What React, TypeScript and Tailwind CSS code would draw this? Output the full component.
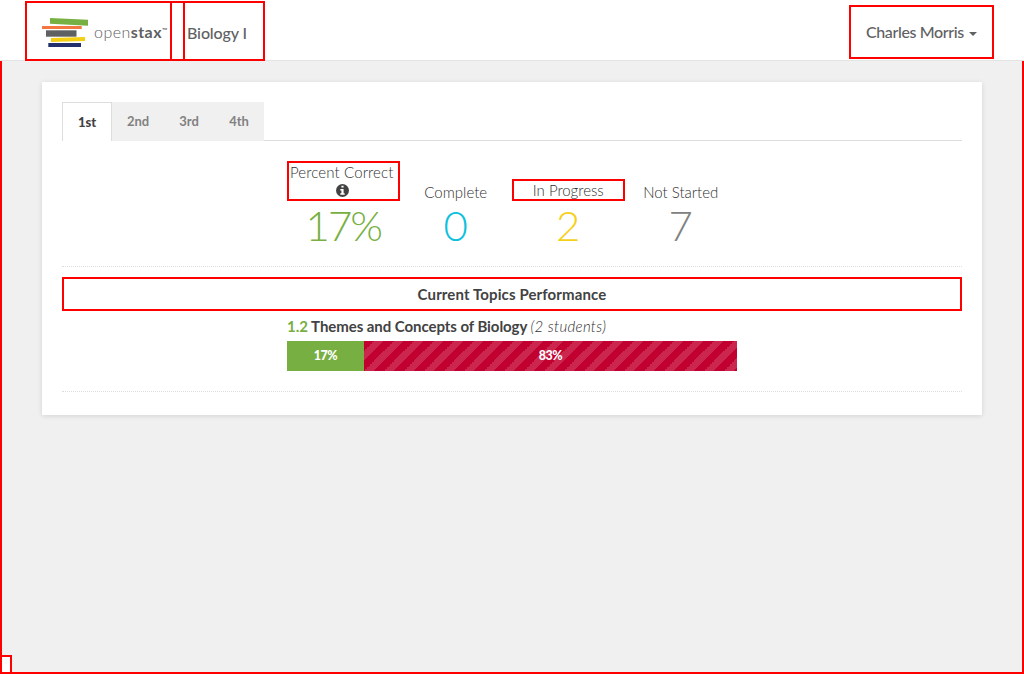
import type { ReactNode } from "react";

function Logo() {
  return (
    <div className="flex h-[60px] w-[147px] shrink-0 items-start border-2 border-[#f00] pl-[15px] pt-[14px]">
      <svg width="47" height="32" viewBox="0 0 47 32" className="shrink-0" aria-hidden="true">
        <path d="M8 1 46 2.7V8.7L8 6.8Z" fill="#77b042" />
        <path d="M0 9H39.7V12H0Z" fill="#f47641" />
        <path d="M4 13.3H34.5V19.7H4Z" fill="#5e6062" />
        <path d="M9 21 43 20V24L9 25Z" fill="#f5cf14" />
        <path d="M6.3 26H39V30H6.3Z" fill="#23306b" />
      </svg>
      <div className="ml-[5px] mt-[3px] flex text-[16px] leading-6 tracking-[0.45px] text-[#5e6062]">
        <span className="font-light">open</span>
        <span className="font-bold">stax</span>
        <span className="text-[7px] leading-[20px] tracking-[-0.3px]">™</span>
      </div>
    </div>
  );
}

function Header() {
  return (
    <header className="relative z-10 flex h-[61px] items-start border-b border-[#e4e4e4] bg-white pl-[25px] pr-[30px] text-[16px] font-medium text-[#5f6163]">
      <div className="mt-px flex">
        <Logo />
        <div className="h-[60px] w-[11px] border-y-2 border-[#f00]" />
        <div className="h-[60px] w-[82px] border-2 border-[#f00] pl-[2px] pt-[18px] leading-6 tracking-[-0.12px]">
          Biology I
        </div>
      </div>
      <div className="ml-auto mt-[5px] flex h-[54px] w-[145px] border-2 border-[#f00] pl-[15px] pt-[13px] leading-6 tracking-[-0.38px]">
        Charles Morris
        <span className="ml-[5px] mt-[12px] h-0 w-0 border-x-4 border-t-4 border-x-transparent border-t-[#5f6163]" />
      </div>
    </header>
  );
}

function Tabs() {
  return (
    <nav className="flex h-[39px] border-b border-[#ddd] text-[13px] font-bold leading-[39px] text-[#818181]">
      <div className="h-[39px] w-[50px] border-x border-t border-[#ddd] bg-white text-center text-[13px] font-black text-[#424242]">
        1st
      </div>
      <div className="h-[39px] w-[52px] bg-[#f0f0f0] text-center">2nd</div>
      <div className="h-[39px] w-[50px] bg-[#f0f0f0] text-center">3rd</div>
      <div className="h-[39px] w-[50px] bg-[#f0f0f0] text-center">4th</div>
    </nav>
  );
}

function Stat({ label, value, color }: { label: ReactNode; value: string; color: string }) {
  return (
    <div className="flex flex-1 flex-col justify-end text-center">
      {label}
      <div className={`h-[50px] text-[42px] font-light leading-[48px] ${color}`}>{value}</div>
    </div>
  );
}

export default function App() {
  return (
    <div className="h-[674px] w-[1024px] overflow-hidden bg-[#f0f0f0] font-[Lato,sans-serif] text-[#424242]">
      <Header />
      <main className="flex h-[613px] flex-col border-x-2 border-b-2 border-[#f00] px-10 pt-[21px]">
        <section className="h-[333px] shrink-0 bg-white px-5 pt-5 shadow-[0_1px_5px_rgba(0,0,0,0.12)]">
          <Tabs />
          <div className="mx-auto mt-5 flex h-[90px] w-[450px] text-[15px] font-light leading-5 text-[#303030]">
            <Stat
              label={
                <div className="flex h-10 flex-col items-center border-2 border-[#f00]">
                  <span className="mr-[3px] h-5 whitespace-nowrap leading-[18px] tracking-[0.12px]">Percent Correct</span>
                  <svg width="13" height="13" viewBox="0 0 12 12" className="mr-px mt-[1px] shrink-0" aria-hidden="true">
                    <circle cx="6" cy="6" r="6" fill="#424242" />
                    <path d="M5 1.5h2v1.8H5zM4 4.5h3v4h1V10H4V8.5h1V6H4z" fill="#fff" />
                  </svg>
                </div>
              }
              value="17%"
              color="text-[#77af42] tracking-[-2px]"
            />
            <Stat label={<div className="h-[18px] leading-[18px]">Complete</div>} value="0" color="text-[#0dc0dc]" />
            <Stat
              label={<div className="h-[22px] border-2 border-[#f00] leading-[19px]">In Progress</div>}
              value="2"
              color="text-[#f4d019]"
            />
            <Stat label={<div className="h-[18px] leading-[18px]">Not Started</div>} value="7" color="text-[#818181]" />
          </div>
          <div className="mt-[15px] border-t border-dotted border-[#ddd]" />
          <h2 className="mt-[10px] h-[34px] border-2 border-[#f00] text-center text-[15px] font-bold leading-[31px] tracking-[0.12px]">
            Current Topics Performance
          </h2>
          <div className="mx-auto w-[450px]">
            <div className="h-[30px] whitespace-nowrap text-[15px] font-bold leading-[30px]">
              <span className="text-[#77af42]">1.2</span>
              <span className="tracking-[-0.06px]"> Themes and Concepts of Biology </span>
              <span className="font-light italic tracking-[0.33px] text-[#303030]">(2 students)</span>
            </div>
            <div className="flex h-[30px] text-center text-[12.5px] font-black leading-[29px] tracking-[-0.4px] text-white">
              <div className="w-[77px] bg-[#77af42]">17%</div>
              <div className="flex-1 bg-[#c2002f] bg-[linear-gradient(-45deg,rgba(255,255,255,.15)_25%,transparent_25%,transparent_50%,rgba(255,255,255,.15)_50%,rgba(255,255,255,.15)_75%,transparent_75%,transparent)] bg-[length:20px_20px]">
                83%
              </div>
            </div>
          </div>
          <div className="mt-5 border-t border-dotted border-[#ddd]" />
        </section>
        <div className="-ml-[42px] mt-auto -mb-[2px] h-[19px] w-3 shrink-0 border-2 border-[#f00] bg-white" />
      </main>
    </div>
  );
}
